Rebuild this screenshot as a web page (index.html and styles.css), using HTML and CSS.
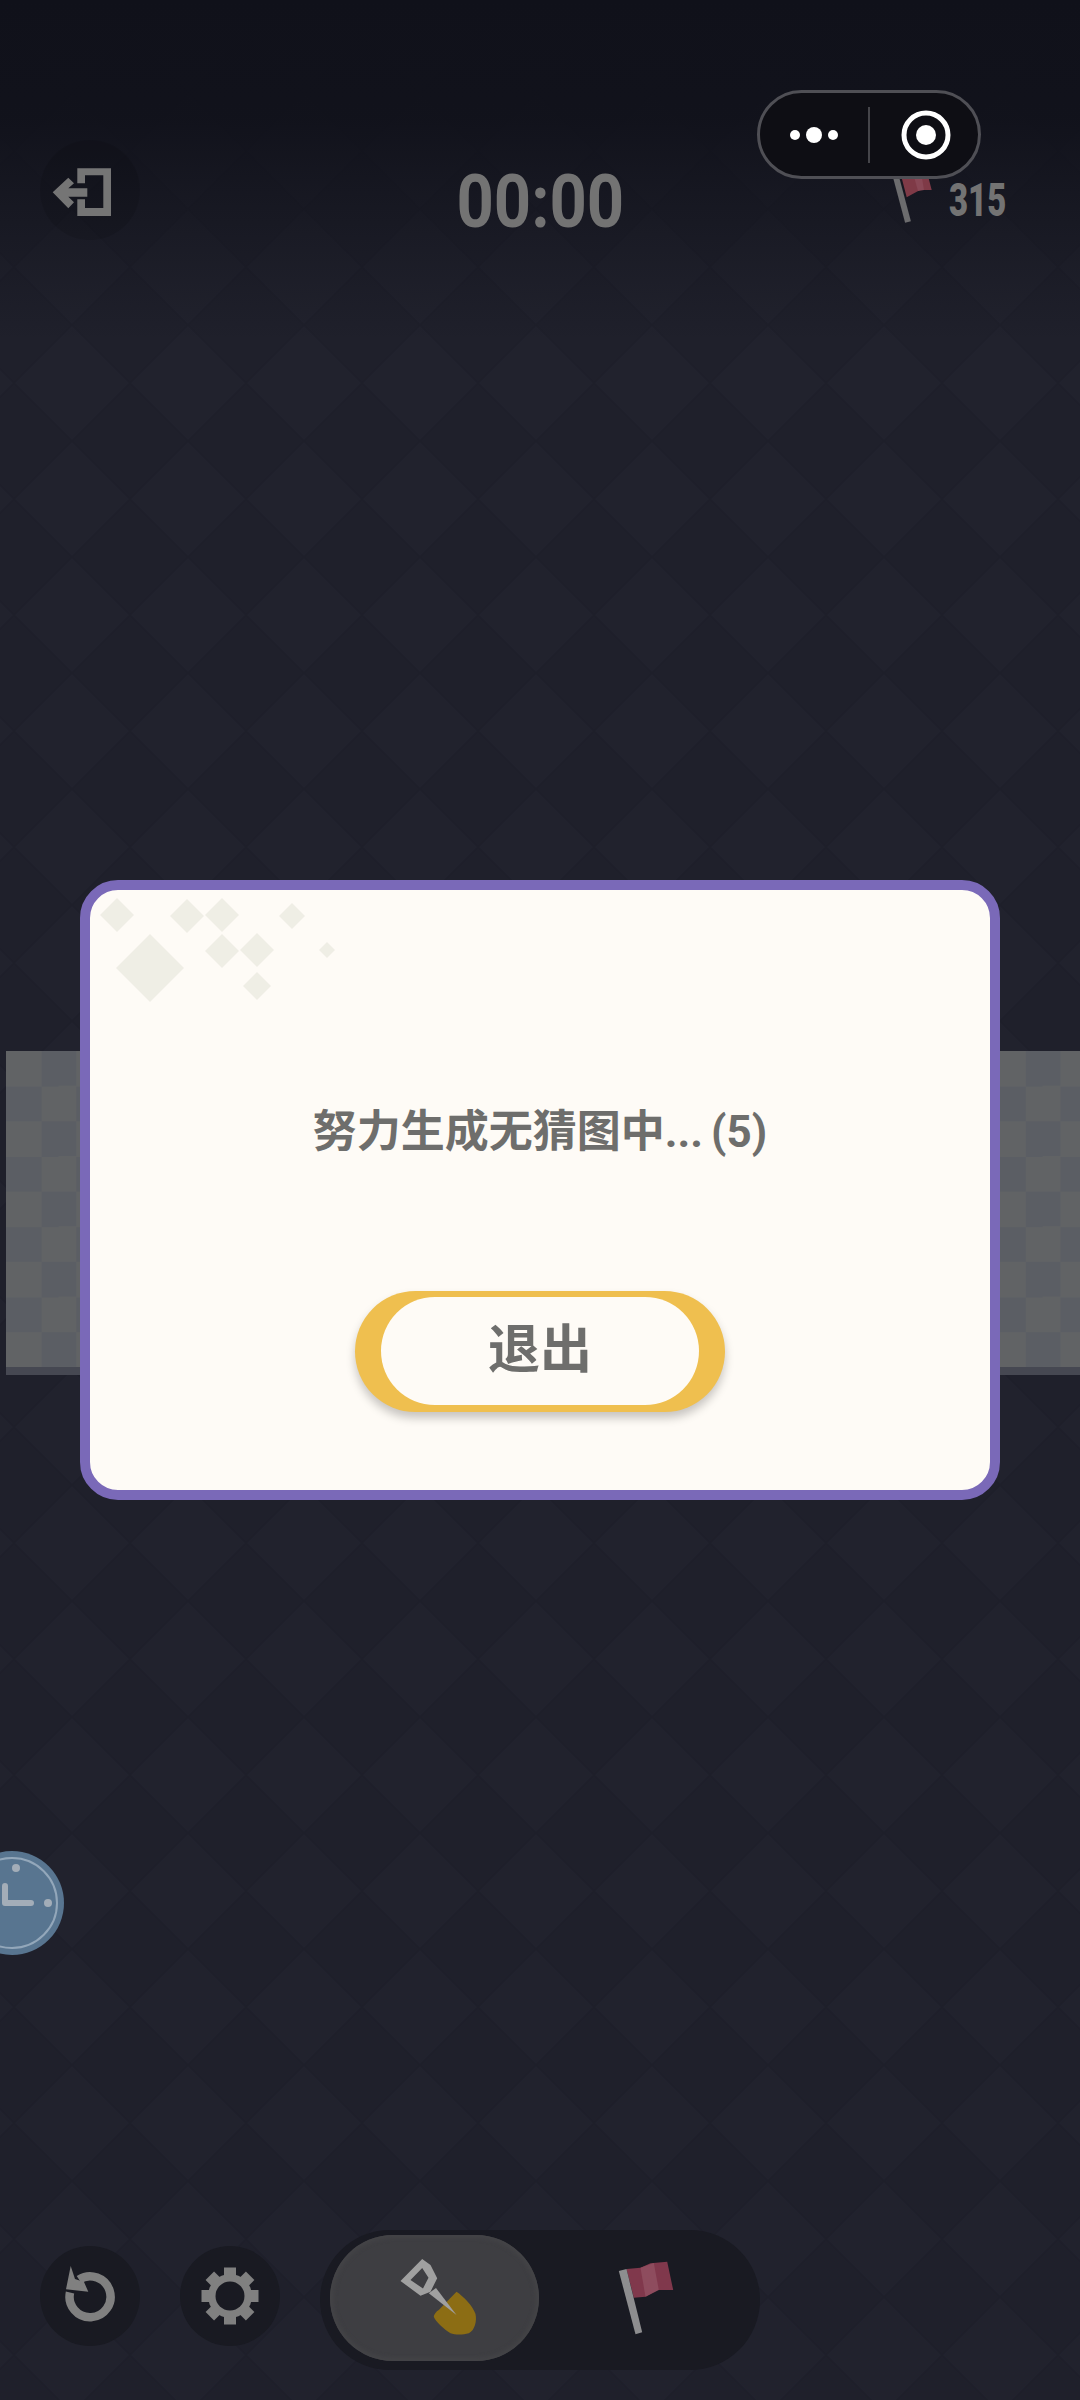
FILE: index.html
```html
<!DOCTYPE html>
<html lang="zh-CN">
<head>
    <meta charset="UTF-8">
    <title>扫雷</title>
    <link rel="stylesheet" href="styles.css">
</head>
<body>
    <div class="page">
        <!-- 背景菱形格 -->
        <svg class="bg-pattern" width="1080" height="2400">
            <defs>
                <pattern id="diamonds" width="116" height="116" patternUnits="userSpaceOnUse" x="14" y="93">
                    <rect width="116" height="116" fill="#1f202b"/>
                    <polygon points="58,0 116,58 58,116 0,58" fill="#21222d" stroke="#1b1c26" stroke-opacity=".3" stroke-width="2"/>
                </pattern>
            </defs>
            <rect width="1080" height="2400" fill="url(#diamonds)"/>
        </svg>
        <div class="top-shade"></div>

        <div class="topbar">
            <div class="exit-btn">
                <svg width="100" height="100" viewBox="0 0 100 100">
                    <path d="M37.3 28.3H71V76H37.3V59.3H45V68H63.3V35.3H45V43.3H37.3Z" fill="#757575"/>
                    <polygon points="12.7,52.3 28.3,37.7 34,43.3 28.3,48.3 47.3,48.3 47.3,56.7 28.3,56.7 34,62.3 28.3,68.3" fill="#757575"/>
                </svg>
            </div>
            <div class="timer">00:00</div>
            <div class="flag-count">
                <svg width="50" height="60" viewBox="0 0 50 60">
                    <polygon points="11.7,10 23,5 36.7,3 41.7,22 30,22 16.7,29.3" fill="#7f3a47"/>
                    <polygon points="23,5 31,4 34,22 28,23" fill="#894856"/>
                    <line x1="6" y1="9" x2="18" y2="54" stroke="#6c6c6e" stroke-width="6"/>
                </svg>
                <span>315</span>
            </div>
        </div>

        <div class="capsule">
            <svg class="capsule-dots" width="60" height="20" viewBox="0 0 60 20">
                <circle cx="11" cy="10" r="5" fill="#fff"/>
                <circle cx="30" cy="10" r="8" fill="#fff"/>
                <circle cx="49" cy="10" r="5" fill="#fff"/>
            </svg>
            <div class="capsule-line"></div>
            <svg class="capsule-ring" width="56" height="56" viewBox="0 0 56 56">
                <circle cx="28" cy="28" r="22" fill="none" stroke="#fff" stroke-width="5"/>
                <circle cx="28" cy="28" r="10" fill="#fff"/>
            </svg>
        </div>

        <div class="stage">
            <div class="board-strip"></div>
            <div class="dialog">
                <svg class="dialog-deco" width="260" height="120" viewBox="0 0 260 120">
                    <polygon points="27,8 44,25 27,42 10,25"/>
                    <polygon points="60,44 94,78 60,112 26,78"/>
                    <polygon points="97,9 114,26 97,43 80,26"/>
                    <polygon points="132,8 149,25 132,42 115,25"/>
                    <polygon points="132,44 149,61 132,78 115,61"/>
                    <polygon points="167,43 184,60 167,77 150,60"/>
                    <polygon points="167,82 181,96 167,110 153,96"/>
                    <polygon points="202,13 215,26 202,39 189,26"/>
                    <polygon points="237,52 245,60 237,68 229,60"/>
                </svg>
                <div class="dialog-title">努力生成无猜图中... (5)</div>
                <div class="quit-btn">
                    <div class="quit-inner">退出</div>
                </div>
            </div>
        </div>

        <svg class="clock" width="64" height="104" viewBox="0 0 64 104">
            <circle cx="12" cy="52" r="52" fill="#587590"/>
            <circle cx="12" cy="52" r="45" fill="none" stroke="#93a7ba" stroke-width="2"/>
            <circle cx="16" cy="17" r="4" fill="#a3adb8"/>
            <circle cx="48" cy="52" r="4" fill="#a3adb8"/>
            <path d="M5 35V52H31" fill="none" stroke="#a3adb8" stroke-width="6" stroke-linecap="round" stroke-linejoin="round"/>
        </svg>

        <div class="bottombar">
            <div class="round-btn">
                <svg width="100" height="100" viewBox="0 0 100 100">
                    <path d="M39 33.5A20.5 20.5 0 1 1 30 46.5" fill="none" stroke="#808080" stroke-width="8.5"/>
                    <polygon points="30.7,20 26,43.3 48.3,45.7 44,36 35,33" fill="#808080"/>
                </svg>
            </div>
            <div class="round-btn">
                <svg width="100" height="100" viewBox="0 0 100 100">
                    <g fill="#808080">
                        <rect x="44" y="21.5" width="12" height="57"/>
                        <rect x="44" y="21.5" width="12" height="57" transform="rotate(45 50 50)"/>
                        <rect x="44" y="21.5" width="12" height="57" transform="rotate(90 50 50)"/>
                        <rect x="44" y="21.5" width="12" height="57" transform="rotate(135 50 50)"/>
                    </g>
                    <circle cx="50" cy="50" r="22" fill="#808080"/>
                    <circle cx="50" cy="50" r="14.5" fill="#191a22"/>
                </svg>
            </div>
            <div class="tool-switch">
                <div class="tool-active">
                    <svg width="100" height="100" viewBox="0 0 100 100">
                        <path d="M71.5 43.7C78 48 88 58 90.5 66C92 73 90 82 83.8 85.3C78 87 70 87 65.5 85.3C60 82 50 73 48.8 68.7C49 66 52 63 53.8 62Z" fill="#8c6d14"/>
                        <path d="M37.2 11L15.5 33L35.5 47.7L45.5 43.7L52.2 30.3L45.5 17ZM37.2 20L25.5 32L38 40.5L43.5 29.7Z" fill="#a0a0a0" fill-rule="evenodd"/>
                        <polygon points="43.8,45.3 51,40 71.5,67" fill="#a0a0a0"/>
                    </svg>
                </div>
                <div class="tool-item">
                    <svg width="100" height="100" viewBox="0 0 100 100">
                        <polygon points="26.5,21 40.5,19.7 50.5,15.3 67.2,13.7 73.2,42 57.2,42 45.5,48.7 33.8,49.7" fill="#80384c"/>
                        <polygon points="40.5,19.7 53.8,15 58.8,42 45.5,48.7" fill="#8e4c5e"/>
                        <polygon points="18.8,23 26.5,21 42.2,84.3 35.5,86.3" fill="#8d8d8f"/>
                    </svg>
                </div>
            </div>
        </div>
    </div>
</body>
</html>
```

FILE: styles.css
```css
* {
    margin: 0;
    padding: 0;
    box-sizing: border-box;
}

body {
    width: 1080px;
    height: 2400px;
    overflow: hidden;
    background: #1f202b;
    font-family: Roboto, "Noto Sans CJK SC", sans-serif;
}

.page {
    position: relative;
    width: 1080px;
    height: 2400px;
    overflow: hidden;
    display: flex;
    flex-direction: column;
}

.bg-pattern {
    position: absolute;
    left: 0;
    top: 0;
}

.top-shade {
    position: absolute;
    left: 0;
    top: 0;
    width: 1080px;
    height: 340px;
    background: linear-gradient(#10111a 0, rgba(16, 17, 26, .92) 35%, rgba(16, 17, 26, .4) 70%, rgba(16, 17, 26, 0) 100%);
}

/* 顶部 */
.topbar {
    position: relative;
    display: grid;
    grid-template-columns: 1fr auto 1fr;
    height: 100px;
    margin-top: 140px;
    padding: 0 40px;
}

.exit-btn {
    width: 100px;
    height: 100px;
    border-radius: 50%;
    background: rgba(0, 0, 0, .1);
}

.timer {
    margin-top: 12px;
    font-size: 74px;
    font-weight: 700;
    line-height: 100px;
    color: #737373;
    transform: scaleX(.88);
}

.flag-count {
    display: flex;
    justify-content: flex-end;
    align-items: flex-start;
    margin-top: 28px;
    margin-right: 35px;
}

.flag-count svg {
    margin-right: 9px;
}

.flag-count span {
    width: 56px;
    margin-top: 2px;
    font-size: 47px;
    font-weight: 900;
    line-height: 60px;
    color: #737373;
    white-space: nowrap;
    transform: scaleX(.7);
    transform-origin: left center;
}

/* 小程序胶囊 */
.capsule {
    position: absolute;
    left: 757px;
    top: 90px;
    width: 224px;
    height: 89px;
    border: 3px solid #4f4f55;
    border-radius: 45px;
    background: #0e0e14;
    display: flex;
    align-items: center;
    padding-left: 24px;
}

.capsule-line {
    width: 2px;
    height: 56px;
    margin-left: 24px;
    background: #45454a;
}

.capsule-ring {
    margin-left: 28px;
}

/* 中间弹窗 */
.stage {
    position: relative;
    flex: 1;
    display: flex;
    justify-content: center;
    align-items: flex-start;
}

.board-strip {
    position: absolute;
    left: 6px;
    right: 0;
    top: 811px;
    height: 324px;
    border-bottom: 8px solid #464852;
    background: conic-gradient(#5b5e64 25%, #616365 0 50%, #5b5e64 0 75%, #616365 0) 0 0 / 70.3px 70.3px;
}

.dialog {
    position: relative;
    width: 920px;
    height: 620px;
    margin-top: 640px;
    border: 10px solid #7a69b8;
    border-radius: 38px;
    background: #fefbf6;
    display: flex;
    flex-direction: column;
    align-items: center;
}

.dialog-deco {
    position: absolute;
    left: 0;
    top: 0;
    fill: #efeee5;
}

.dialog-title {
    margin-top: 212px;
    font-size: 44px;
    font-weight: 700;
    line-height: 60px;
    word-spacing: -3px;
    color: #6e6e6c;
}

.quit-btn {
    width: 370px;
    height: 121px;
    margin-top: 129px;
    padding: 6px 26px 7px;
    border-radius: 61px;
    background: #efbf4f;
    box-shadow: 0 6px 10px rgba(0, 0, 0, .22);
}

.quit-inner {
    height: 108px;
    border-radius: 54px;
    background: #fefbf6;
    text-align: center;
    font-size: 52px;
    font-weight: 700;
    line-height: 108px;
    color: #6e6e6c;
}

.clock {
    position: absolute;
    left: 0;
    top: 1851px;
}

/* 底部工具 */
.bottombar {
    position: relative;
    display: flex;
    align-items: flex-start;
    gap: 40px;
    height: 140px;
    margin-bottom: 30px;
    padding-left: 40px;
}

.round-btn {
    width: 100px;
    height: 100px;
    margin-top: 16px;
    border-radius: 50%;
    background: #191a22;
    flex-shrink: 0;
}

.tool-switch {
    width: 440px;
    height: 140px;
    border-radius: 70px;
    background: #191a22;
    display: flex;
    align-items: flex-start;
    padding: 5px 0 0 10px;
}

.tool-active {
    width: 209px;
    height: 126px;
    border-radius: 63px;
    background: #3e3e42;
    box-shadow: inset 0 0 4px 3px #444447;
    display: flex;
    align-items: center;
    justify-content: center;
}

.tool-item {
    flex: 1;
    height: 126px;
    display: flex;
    align-items: center;
    justify-content: center;
}
```
